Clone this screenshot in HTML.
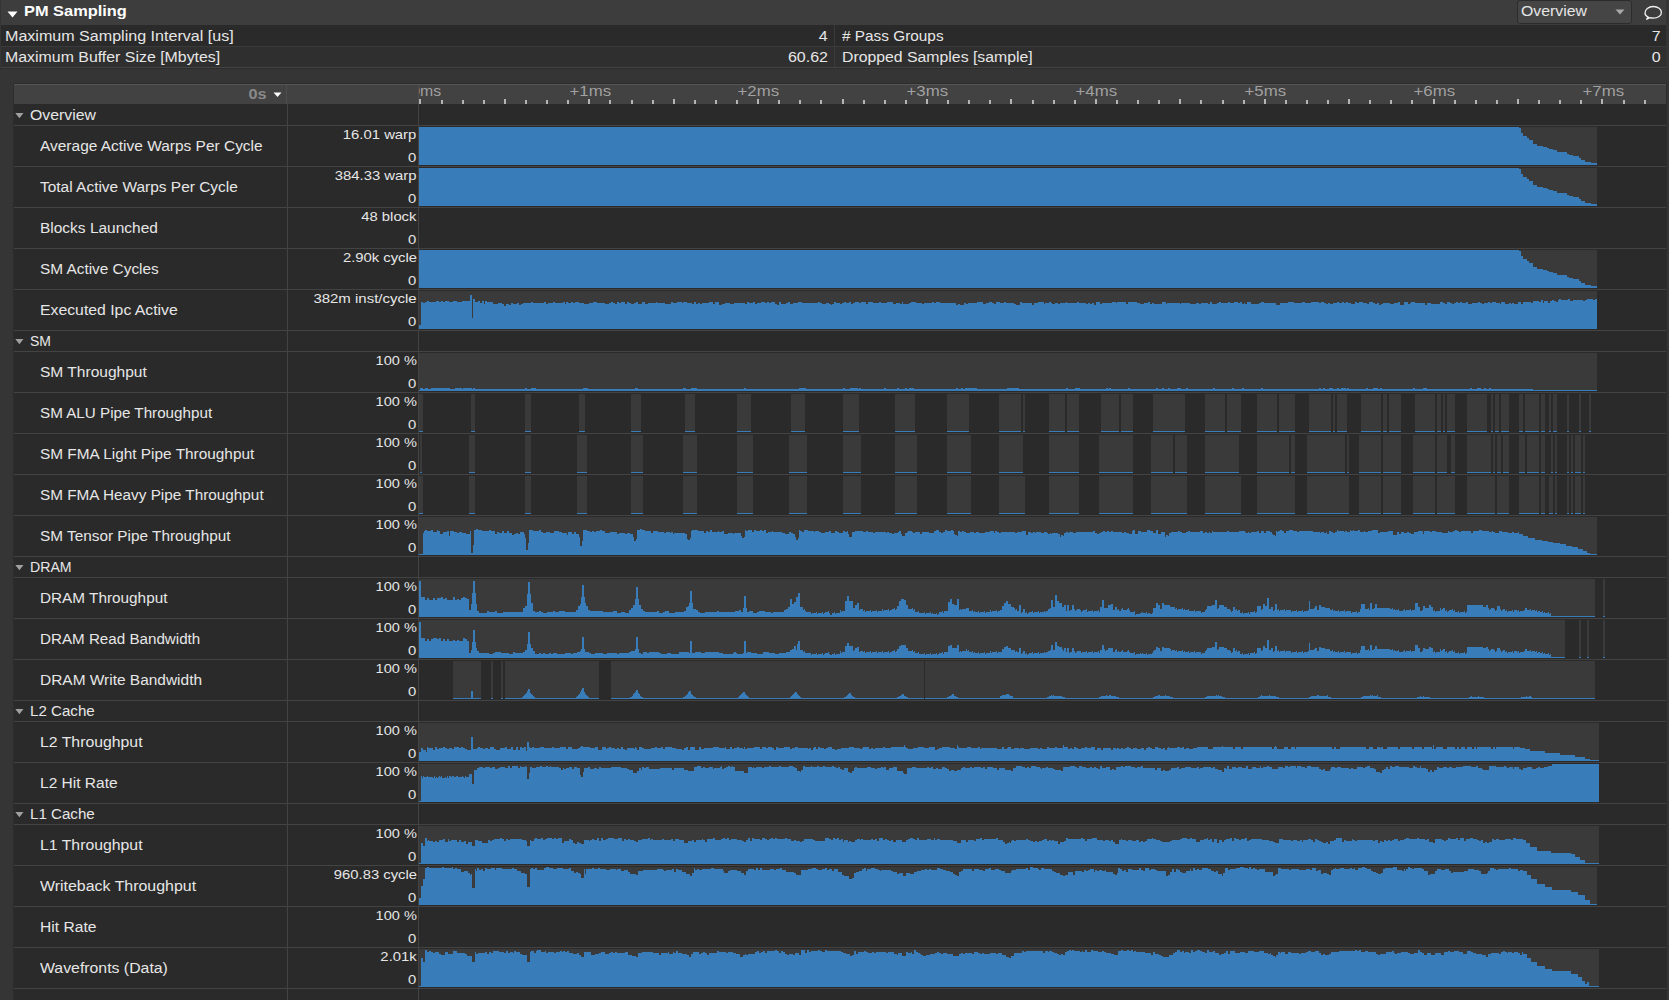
<!DOCTYPE html>
<html><head><meta charset="utf-8"><title>PM Sampling</title>
<style>
html,body{margin:0;padding:0;background:#353535;width:1669px;height:1000px;overflow:hidden}
body{position:relative;font-family:"Liberation Sans",sans-serif}
.r{position:absolute}
.t{position:absolute;white-space:nowrap;line-height:1}
svg{shape-rendering:geometricPrecision}
svg.c{shape-rendering:crispEdges}
</style></head><body>
<div class="r" style="left:0px;top:0px;width:1669px;height:1000px;background:#353535;"></div>
<div class="r" style="left:1px;top:0px;width:1665px;height:25px;background:#3d3d3d;"></div>
<svg class="r" style="left:7px;top:11px" width="11" height="7"><path d="M0.5 0.5 L10.5 0.5 L5.5 6.5 Z" fill="#ffffff"/></svg>
<div class="t" style="left:24px;top:4.15px;font-size:14px;font-weight:bold;color:#ffffff;transform:scaleX(1.1696);transform-origin:0 0;">PM Sampling</div>
<div class="r" style="left:1517px;top:0px;width:113px;height:22px;border:1px solid #2c2c2c;border-radius:3px;background:#454545"></div>
<div class="t" style="left:1521px;top:4.15px;font-size:14px;color:#e6e6e6;transform:scaleX(1.1297);transform-origin:0 0;">Overview</div>
<svg class="r" style="left:1615px;top:9px" width="10" height="6"><path d="M0.5 0.5 L9.5 0.5 L5 5.5 Z" fill="#a8a8a8"/></svg>
<svg class="r" style="left:1644px;top:5px" width="19" height="16"><path d="M4.2 12.2 C1.8 11 1 9.6 1 8 C1 4.6 4.4 1.5 9.2 1.5 C14 1.5 17.4 4.2 17.4 7.4 C17.4 10.6 14 13.2 9.2 13.2 C8 13.2 6.9 13 5.9 12.7 L2.4 14.4 Z" fill="none" stroke="#f0f0f0" stroke-width="1.3"/></svg>
<div class="r" style="left:1px;top:25px;width:1665px;height:21px;background:#2a2a2a;"></div>
<div class="r" style="left:1px;top:46px;width:1665px;height:1px;background:#3a3a3a;"></div>
<div class="r" style="left:1px;top:47px;width:1665px;height:20px;background:#2f2f2f;"></div>
<div class="r" style="left:1px;top:67px;width:1665px;height:1px;background:#444444;"></div>
<div class="r" style="left:0px;top:68px;width:1667px;height:1px;background:#2c2c2c;"></div>
<div class="r" style="left:834px;top:25px;width:1px;height:42px;background:#3a3a3a;"></div>
<div class="t" style="left:5px;top:29.15px;font-size:14px;color:#e6e6e6;transform:scaleX(1.1481);transform-origin:0 0;">Maximum Sampling Interval [us]</div>
<div class="t" style="right:841px;top:29.15px;font-size:14px;color:#e6e6e6;transform:scaleX(1.1446);transform-origin:100% 0;">4</div>
<div class="t" style="left:842px;top:29.15px;font-size:14px;color:#e6e6e6;transform:scaleX(1.0967);transform-origin:0 0;"># Pass Groups</div>
<div class="t" style="right:8px;top:29.15px;font-size:14px;color:#e6e6e6;transform:scaleX(1.1446);transform-origin:100% 0;">7</div>
<div class="t" style="left:5px;top:50.15px;font-size:14px;color:#e6e6e6;transform:scaleX(1.1351);transform-origin:0 0;">Maximum Buffer Size [Mbytes]</div>
<div class="t" style="right:841px;top:50.15px;font-size:14px;color:#e6e6e6;transform:scaleX(1.1446);transform-origin:100% 0;">60.62</div>
<div class="t" style="left:842px;top:50.15px;font-size:14px;color:#e6e6e6;transform:scaleX(1.1292);transform-origin:0 0;">Dropped Samples [sample]</div>
<div class="t" style="right:8px;top:50.15px;font-size:14px;color:#e6e6e6;transform:scaleX(1.1446);transform-origin:100% 0;">0</div>
<div class="r" style="left:13px;top:83px;width:1654px;height:917px;background:#2c2c2c;"></div>
<div class="r" style="left:14px;top:84px;width:1652px;height:916px;background:#2a2a2a;"></div>
<div class="r" style="left:14px;top:84px;width:1652px;height:1px;background:#555555;"></div>
<div class="r" style="left:14px;top:85px;width:1652px;height:19px;background:#424242;"></div>
<div class="r" style="left:286px;top:85px;width:1px;height:19px;background:#4e4e4e;"></div>
<div class="r" style="left:418px;top:85px;width:1px;height:19px;background:#4e4e4e;"></div>
<div class="t" style="right:1402px;top:87.15px;font-size:14px;font-weight:bold;color:#8a8a8a;transform:scaleX(1.1606);transform-origin:100% 0;">0s</div>
<svg class="r" style="left:273px;top:92px" width="9" height="6"><path d="M0.5 0.5 L8.5 0.5 L4.5 5 Z" fill="#ffffff"/></svg>
<div class="r" style="left:419px;top:85px;width:1247px;height:19px;overflow:hidden">
<div class="r" style="left:0.4px;top:14px;width:2px;height:5px;background:#b4b4b4"></div><div class="r" style="left:21.5px;top:15px;width:2px;height:4px;background:#b4b4b4"></div><div class="r" style="left:42.6px;top:15px;width:2px;height:4px;background:#b4b4b4"></div><div class="r" style="left:63.7px;top:15px;width:2px;height:4px;background:#b4b4b4"></div><div class="r" style="left:84.8px;top:14px;width:2px;height:5px;background:#b4b4b4"></div><div class="r" style="left:105.9px;top:15px;width:2px;height:4px;background:#b4b4b4"></div><div class="r" style="left:127.0px;top:15px;width:2px;height:4px;background:#b4b4b4"></div><div class="r" style="left:148.1px;top:15px;width:2px;height:4px;background:#b4b4b4"></div><div class="r" style="left:169.3px;top:14px;width:2px;height:5px;background:#b4b4b4"></div><div class="r" style="left:190.4px;top:15px;width:2px;height:4px;background:#b4b4b4"></div><div class="r" style="left:211.5px;top:15px;width:2px;height:4px;background:#b4b4b4"></div><div class="r" style="left:232.6px;top:15px;width:2px;height:4px;background:#b4b4b4"></div><div class="r" style="left:253.7px;top:14px;width:2px;height:5px;background:#b4b4b4"></div><div class="r" style="left:274.8px;top:15px;width:2px;height:4px;background:#b4b4b4"></div><div class="r" style="left:295.9px;top:15px;width:2px;height:4px;background:#b4b4b4"></div><div class="r" style="left:317.0px;top:15px;width:2px;height:4px;background:#b4b4b4"></div><div class="r" style="left:338.1px;top:14px;width:2px;height:5px;background:#b4b4b4"></div><div class="r" style="left:359.2px;top:15px;width:2px;height:4px;background:#b4b4b4"></div><div class="r" style="left:380.3px;top:15px;width:2px;height:4px;background:#b4b4b4"></div><div class="r" style="left:401.4px;top:15px;width:2px;height:4px;background:#b4b4b4"></div><div class="r" style="left:422.5px;top:14px;width:2px;height:5px;background:#b4b4b4"></div><div class="r" style="left:443.6px;top:15px;width:2px;height:4px;background:#b4b4b4"></div><div class="r" style="left:464.8px;top:15px;width:2px;height:4px;background:#b4b4b4"></div><div class="r" style="left:485.9px;top:15px;width:2px;height:4px;background:#b4b4b4"></div><div class="r" style="left:507.0px;top:14px;width:2px;height:5px;background:#b4b4b4"></div><div class="r" style="left:528.1px;top:15px;width:2px;height:4px;background:#b4b4b4"></div><div class="r" style="left:549.2px;top:15px;width:2px;height:4px;background:#b4b4b4"></div><div class="r" style="left:570.3px;top:15px;width:2px;height:4px;background:#b4b4b4"></div><div class="r" style="left:591.4px;top:14px;width:2px;height:5px;background:#b4b4b4"></div><div class="r" style="left:612.5px;top:15px;width:2px;height:4px;background:#b4b4b4"></div><div class="r" style="left:633.6px;top:15px;width:2px;height:4px;background:#b4b4b4"></div><div class="r" style="left:654.7px;top:15px;width:2px;height:4px;background:#b4b4b4"></div><div class="r" style="left:675.8px;top:14px;width:2px;height:5px;background:#b4b4b4"></div><div class="r" style="left:696.9px;top:15px;width:2px;height:4px;background:#b4b4b4"></div><div class="r" style="left:718.0px;top:15px;width:2px;height:4px;background:#b4b4b4"></div><div class="r" style="left:739.1px;top:15px;width:2px;height:4px;background:#b4b4b4"></div><div class="r" style="left:760.3px;top:14px;width:2px;height:5px;background:#b4b4b4"></div><div class="r" style="left:781.4px;top:15px;width:2px;height:4px;background:#b4b4b4"></div><div class="r" style="left:802.5px;top:15px;width:2px;height:4px;background:#b4b4b4"></div><div class="r" style="left:823.6px;top:15px;width:2px;height:4px;background:#b4b4b4"></div><div class="r" style="left:844.7px;top:14px;width:2px;height:5px;background:#b4b4b4"></div><div class="r" style="left:865.8px;top:15px;width:2px;height:4px;background:#b4b4b4"></div><div class="r" style="left:886.9px;top:15px;width:2px;height:4px;background:#b4b4b4"></div><div class="r" style="left:908.0px;top:15px;width:2px;height:4px;background:#b4b4b4"></div><div class="r" style="left:929.1px;top:14px;width:2px;height:5px;background:#b4b4b4"></div><div class="r" style="left:950.2px;top:15px;width:2px;height:4px;background:#b4b4b4"></div><div class="r" style="left:971.3px;top:15px;width:2px;height:4px;background:#b4b4b4"></div><div class="r" style="left:992.4px;top:15px;width:2px;height:4px;background:#b4b4b4"></div><div class="r" style="left:1013.5px;top:14px;width:2px;height:5px;background:#b4b4b4"></div><div class="r" style="left:1034.6px;top:15px;width:2px;height:4px;background:#b4b4b4"></div><div class="r" style="left:1055.8px;top:15px;width:2px;height:4px;background:#b4b4b4"></div><div class="r" style="left:1076.9px;top:15px;width:2px;height:4px;background:#b4b4b4"></div><div class="r" style="left:1098.0px;top:14px;width:2px;height:5px;background:#b4b4b4"></div><div class="r" style="left:1119.1px;top:15px;width:2px;height:4px;background:#b4b4b4"></div><div class="r" style="left:1140.2px;top:15px;width:2px;height:4px;background:#b4b4b4"></div><div class="r" style="left:1161.3px;top:15px;width:2px;height:4px;background:#b4b4b4"></div><div class="r" style="left:1182.4px;top:14px;width:2px;height:5px;background:#b4b4b4"></div><div class="r" style="left:1203.5px;top:15px;width:2px;height:4px;background:#b4b4b4"></div><div class="r" style="left:1224.6px;top:15px;width:2px;height:4px;background:#b4b4b4"></div>
<div class="t" style="left:-6.22px;top:-0.85px;font-size:14px;color:#a0a0a0;transform:scaleX(1.1288);transform-origin:50% 0">0ms</div>
<div class="t" style="left:153.56px;top:-0.85px;font-size:14px;color:#a0a0a0;transform:scaleX(1.2014);transform-origin:50% 0">+1ms</div>
<div class="t" style="left:322.42px;top:-0.85px;font-size:14px;color:#a0a0a0;transform:scaleX(1.2014);transform-origin:50% 0">+2ms</div>
<div class="t" style="left:491.28px;top:-0.85px;font-size:14px;color:#a0a0a0;transform:scaleX(1.2014);transform-origin:50% 0">+3ms</div>
<div class="t" style="left:660.14px;top:-0.85px;font-size:14px;color:#a0a0a0;transform:scaleX(1.2014);transform-origin:50% 0">+4ms</div>
<div class="t" style="left:829.00px;top:-0.85px;font-size:14px;color:#a0a0a0;transform:scaleX(1.2014);transform-origin:50% 0">+5ms</div>
<div class="t" style="left:997.86px;top:-0.85px;font-size:14px;color:#a0a0a0;transform:scaleX(1.2014);transform-origin:50% 0">+6ms</div>
<div class="t" style="left:1166.72px;top:-0.85px;font-size:14px;color:#a0a0a0;transform:scaleX(1.2014);transform-origin:50% 0">+7ms</div>
</div>
<svg class="r" style="left:15px;top:113px" width="9" height="6"><path d="M0.3 0 L8.5 0 L4.4 5.2 Z" fill="#a0a0a0"/></svg>
<div class="t" style="left:30px;top:108.15px;font-size:14px;color:#e6e6e6;transform:scaleX(1.1297);transform-origin:0 0;">Overview</div>
<div class="r" style="left:14px;top:125px;width:1652px;height:1px;background:#434343;"></div>
<div class="t" style="left:40px;top:139.15px;font-size:14px;color:#e6e6e6;transform:scaleX(1.1048);transform-origin:0 0;">Average Active Warps Per Cycle</div>
<div class="t" style="right:1252.3px;top:128.00px;font-size:13px;color:#e6e6e6;transform:scaleX(1.1423);transform-origin:100% 0;">16.01 warp</div>
<div class="t" style="right:1252.3px;top:151.00px;font-size:13px;color:#e6e6e6;transform:scaleX(1.1425);transform-origin:100% 0;">0</div>
<div class="r" style="left:14px;top:166px;width:1652px;height:1px;background:#434343;"></div>
<div class="t" style="left:40px;top:180.15px;font-size:14px;color:#e6e6e6;transform:scaleX(1.1040);transform-origin:0 0;">Total Active Warps Per Cycle</div>
<div class="t" style="right:1252.3px;top:169.00px;font-size:13px;color:#e6e6e6;transform:scaleX(1.1423);transform-origin:100% 0;">384.33 warp</div>
<div class="t" style="right:1252.3px;top:192.00px;font-size:13px;color:#e6e6e6;transform:scaleX(1.1425);transform-origin:100% 0;">0</div>
<div class="r" style="left:14px;top:207px;width:1652px;height:1px;background:#434343;"></div>
<div class="t" style="left:40px;top:221.15px;font-size:14px;color:#e6e6e6;transform:scaleX(1.1054);transform-origin:0 0;">Blocks Launched</div>
<div class="t" style="right:1252.3px;top:210.00px;font-size:13px;color:#e6e6e6;transform:scaleX(1.1384);transform-origin:100% 0;">48 block</div>
<div class="t" style="right:1252.3px;top:233.00px;font-size:13px;color:#e6e6e6;transform:scaleX(1.1425);transform-origin:100% 0;">0</div>
<div class="r" style="left:14px;top:248px;width:1652px;height:1px;background:#434343;"></div>
<div class="t" style="left:40px;top:262.15px;font-size:14px;color:#e6e6e6;transform:scaleX(1.0980);transform-origin:0 0;">SM Active Cycles</div>
<div class="t" style="right:1252.3px;top:251.00px;font-size:13px;color:#e6e6e6;transform:scaleX(1.1400);transform-origin:100% 0;">2.90k cycle</div>
<div class="t" style="right:1252.3px;top:274.00px;font-size:13px;color:#e6e6e6;transform:scaleX(1.1425);transform-origin:100% 0;">0</div>
<div class="r" style="left:14px;top:289px;width:1652px;height:1px;background:#434343;"></div>
<div class="t" style="left:40px;top:303.15px;font-size:14px;color:#e6e6e6;transform:scaleX(1.1278);transform-origin:0 0;">Executed Ipc Active</div>
<div class="t" style="right:1252.3px;top:292.00px;font-size:13px;color:#e6e6e6;transform:scaleX(1.1520);transform-origin:100% 0;">382m inst/cycle</div>
<div class="t" style="right:1252.3px;top:315.00px;font-size:13px;color:#e6e6e6;transform:scaleX(1.1425);transform-origin:100% 0;">0</div>
<div class="r" style="left:14px;top:330px;width:1652px;height:1px;background:#434343;"></div>
<svg class="r" style="left:15px;top:339px" width="9" height="6"><path d="M0.3 0 L8.5 0 L4.4 5.2 Z" fill="#a0a0a0"/></svg>
<div class="t" style="left:30px;top:334.15px;font-size:14px;color:#e6e6e6;transform:scaleX(0.9985);transform-origin:0 0;">SM</div>
<div class="r" style="left:14px;top:351px;width:1652px;height:1px;background:#434343;"></div>
<div class="t" style="left:40px;top:365.15px;font-size:14px;color:#e6e6e6;transform:scaleX(1.1095);transform-origin:0 0;">SM Throughput</div>
<div class="t" style="right:1252.3px;top:354.00px;font-size:13px;color:#e6e6e6;transform:scaleX(1.1195);transform-origin:100% 0;">100 %</div>
<div class="t" style="right:1252.3px;top:377.00px;font-size:13px;color:#e6e6e6;transform:scaleX(1.1425);transform-origin:100% 0;">0</div>
<div class="r" style="left:14px;top:392px;width:1652px;height:1px;background:#434343;"></div>
<div class="t" style="left:40px;top:406.15px;font-size:14px;color:#e6e6e6;transform:scaleX(1.0859);transform-origin:0 0;">SM ALU Pipe Throughput</div>
<div class="t" style="right:1252.3px;top:395.00px;font-size:13px;color:#e6e6e6;transform:scaleX(1.1195);transform-origin:100% 0;">100 %</div>
<div class="t" style="right:1252.3px;top:418.00px;font-size:13px;color:#e6e6e6;transform:scaleX(1.1425);transform-origin:100% 0;">0</div>
<div class="r" style="left:14px;top:433px;width:1652px;height:1px;background:#434343;"></div>
<div class="t" style="left:40px;top:447.15px;font-size:14px;color:#e6e6e6;transform:scaleX(1.0986);transform-origin:0 0;">SM FMA Light Pipe Throughput</div>
<div class="t" style="right:1252.3px;top:436.00px;font-size:13px;color:#e6e6e6;transform:scaleX(1.1195);transform-origin:100% 0;">100 %</div>
<div class="t" style="right:1252.3px;top:459.00px;font-size:13px;color:#e6e6e6;transform:scaleX(1.1425);transform-origin:100% 0;">0</div>
<div class="r" style="left:14px;top:474px;width:1652px;height:1px;background:#434343;"></div>
<div class="t" style="left:40px;top:488.15px;font-size:14px;color:#e6e6e6;transform:scaleX(1.0942);transform-origin:0 0;">SM FMA Heavy Pipe Throughput</div>
<div class="t" style="right:1252.3px;top:477.00px;font-size:13px;color:#e6e6e6;transform:scaleX(1.1195);transform-origin:100% 0;">100 %</div>
<div class="t" style="right:1252.3px;top:500.00px;font-size:13px;color:#e6e6e6;transform:scaleX(1.1425);transform-origin:100% 0;">0</div>
<div class="r" style="left:14px;top:515px;width:1652px;height:1px;background:#434343;"></div>
<div class="t" style="left:40px;top:529.15px;font-size:14px;color:#e6e6e6;transform:scaleX(1.0960);transform-origin:0 0;">SM Tensor Pipe Throughput</div>
<div class="t" style="right:1252.3px;top:518.00px;font-size:13px;color:#e6e6e6;transform:scaleX(1.1195);transform-origin:100% 0;">100 %</div>
<div class="t" style="right:1252.3px;top:541.00px;font-size:13px;color:#e6e6e6;transform:scaleX(1.1425);transform-origin:100% 0;">0</div>
<div class="r" style="left:14px;top:556px;width:1652px;height:1px;background:#434343;"></div>
<svg class="r" style="left:15px;top:565px" width="9" height="6"><path d="M0.3 0 L8.5 0 L4.4 5.2 Z" fill="#a0a0a0"/></svg>
<div class="t" style="left:30px;top:560.15px;font-size:14px;color:#e6e6e6;transform:scaleX(1.0095);transform-origin:0 0;">DRAM</div>
<div class="r" style="left:14px;top:577px;width:1652px;height:1px;background:#434343;"></div>
<div class="t" style="left:40px;top:591.15px;font-size:14px;color:#e6e6e6;transform:scaleX(1.0941);transform-origin:0 0;">DRAM Throughput</div>
<div class="t" style="right:1252.3px;top:580.00px;font-size:13px;color:#e6e6e6;transform:scaleX(1.1195);transform-origin:100% 0;">100 %</div>
<div class="t" style="right:1252.3px;top:603.00px;font-size:13px;color:#e6e6e6;transform:scaleX(1.1425);transform-origin:100% 0;">0</div>
<div class="r" style="left:14px;top:618px;width:1652px;height:1px;background:#434343;"></div>
<div class="t" style="left:40px;top:632.15px;font-size:14px;color:#e6e6e6;transform:scaleX(1.0841);transform-origin:0 0;">DRAM Read Bandwidth</div>
<div class="t" style="right:1252.3px;top:621.00px;font-size:13px;color:#e6e6e6;transform:scaleX(1.1195);transform-origin:100% 0;">100 %</div>
<div class="t" style="right:1252.3px;top:644.00px;font-size:13px;color:#e6e6e6;transform:scaleX(1.1425);transform-origin:100% 0;">0</div>
<div class="r" style="left:14px;top:659px;width:1652px;height:1px;background:#434343;"></div>
<div class="t" style="left:40px;top:673.15px;font-size:14px;color:#e6e6e6;transform:scaleX(1.1039);transform-origin:0 0;">DRAM Write Bandwidth</div>
<div class="t" style="right:1252.3px;top:662.00px;font-size:13px;color:#e6e6e6;transform:scaleX(1.1195);transform-origin:100% 0;">100 %</div>
<div class="t" style="right:1252.3px;top:685.00px;font-size:13px;color:#e6e6e6;transform:scaleX(1.1425);transform-origin:100% 0;">0</div>
<div class="r" style="left:14px;top:700px;width:1652px;height:1px;background:#434343;"></div>
<svg class="r" style="left:15px;top:709px" width="9" height="6"><path d="M0.3 0 L8.5 0 L4.4 5.2 Z" fill="#a0a0a0"/></svg>
<div class="t" style="left:30px;top:704.15px;font-size:14px;color:#e6e6e6;transform:scaleX(1.0801);transform-origin:0 0;">L2 Cache</div>
<div class="r" style="left:14px;top:721px;width:1652px;height:1px;background:#434343;"></div>
<div class="t" style="left:40px;top:735.15px;font-size:14px;color:#e6e6e6;transform:scaleX(1.1289);transform-origin:0 0;">L2 Throughput</div>
<div class="t" style="right:1252.3px;top:724.00px;font-size:13px;color:#e6e6e6;transform:scaleX(1.1195);transform-origin:100% 0;">100 %</div>
<div class="t" style="right:1252.3px;top:747.00px;font-size:13px;color:#e6e6e6;transform:scaleX(1.1425);transform-origin:100% 0;">0</div>
<div class="r" style="left:14px;top:762px;width:1652px;height:1px;background:#434343;"></div>
<div class="t" style="left:40px;top:776.15px;font-size:14px;color:#e6e6e6;transform:scaleX(1.1085);transform-origin:0 0;">L2 Hit Rate</div>
<div class="t" style="right:1252.3px;top:765.00px;font-size:13px;color:#e6e6e6;transform:scaleX(1.1195);transform-origin:100% 0;">100 %</div>
<div class="t" style="right:1252.3px;top:788.00px;font-size:13px;color:#e6e6e6;transform:scaleX(1.1425);transform-origin:100% 0;">0</div>
<div class="r" style="left:14px;top:803px;width:1652px;height:1px;background:#434343;"></div>
<svg class="r" style="left:15px;top:812px" width="9" height="6"><path d="M0.3 0 L8.5 0 L4.4 5.2 Z" fill="#a0a0a0"/></svg>
<div class="t" style="left:30px;top:807.15px;font-size:14px;color:#e6e6e6;transform:scaleX(1.0801);transform-origin:0 0;">L1 Cache</div>
<div class="r" style="left:14px;top:824px;width:1652px;height:1px;background:#434343;"></div>
<div class="t" style="left:40px;top:838.15px;font-size:14px;color:#e6e6e6;transform:scaleX(1.1289);transform-origin:0 0;">L1 Throughput</div>
<div class="t" style="right:1252.3px;top:827.00px;font-size:13px;color:#e6e6e6;transform:scaleX(1.1195);transform-origin:100% 0;">100 %</div>
<div class="t" style="right:1252.3px;top:850.00px;font-size:13px;color:#e6e6e6;transform:scaleX(1.1425);transform-origin:100% 0;">0</div>
<div class="r" style="left:14px;top:865px;width:1652px;height:1px;background:#434343;"></div>
<div class="t" style="left:40px;top:879.15px;font-size:14px;color:#e6e6e6;transform:scaleX(1.1373);transform-origin:0 0;">Writeback Throughput</div>
<div class="t" style="right:1252.3px;top:868.00px;font-size:13px;color:#e6e6e6;transform:scaleX(1.1389);transform-origin:100% 0;">960.83 cycle</div>
<div class="t" style="right:1252.3px;top:891.00px;font-size:13px;color:#e6e6e6;transform:scaleX(1.1425);transform-origin:100% 0;">0</div>
<div class="r" style="left:14px;top:906px;width:1652px;height:1px;background:#434343;"></div>
<div class="t" style="left:40px;top:920.15px;font-size:14px;color:#e6e6e6;transform:scaleX(1.1165);transform-origin:0 0;">Hit Rate</div>
<div class="t" style="right:1252.3px;top:909.00px;font-size:13px;color:#e6e6e6;transform:scaleX(1.1195);transform-origin:100% 0;">100 %</div>
<div class="t" style="right:1252.3px;top:932.00px;font-size:13px;color:#e6e6e6;transform:scaleX(1.1425);transform-origin:100% 0;">0</div>
<div class="r" style="left:14px;top:947px;width:1652px;height:1px;background:#434343;"></div>
<div class="t" style="left:40px;top:961.15px;font-size:14px;color:#e6e6e6;transform:scaleX(1.1308);transform-origin:0 0;">Wavefronts (Data)</div>
<div class="t" style="right:1252.3px;top:950.00px;font-size:13px;color:#e6e6e6;transform:scaleX(1.1459);transform-origin:100% 0;">2.01k</div>
<div class="t" style="right:1252.3px;top:973.00px;font-size:13px;color:#e6e6e6;transform:scaleX(1.1425);transform-origin:100% 0;">0</div>
<div class="r" style="left:14px;top:988px;width:1652px;height:1px;background:#434343;"></div>
<div class="r" style="left:287px;top:104px;width:1px;height:896px;background:#434343;"></div>
<div class="r" style="left:418px;top:104px;width:1px;height:896px;background:#434343;"></div>
<svg class="r c" style="left:419px;top:127px" width="1189" height="38"><rect x="0" y="0" width="1178" height="38" fill="#3a3a3a"/><path d="M0 38H0V0H1100V1H1102V6H1104V9H1108V11H1110V13H1114V17H1118V19H1124V20H1128V21H1130V22H1134V23H1138V25H1148V27H1150V28H1154V29H1160V31H1162V33H1166V35H1172V36H1178V38H1181V38Z" fill="#387db9"/></svg>
<svg class="r c" style="left:419px;top:168px" width="1189" height="38"><rect x="0" y="0" width="1178" height="38" fill="#3a3a3a"/><path d="M0 38H0V0H1100V1H1102V6H1104V9H1108V11H1110V13H1114V17H1118V19H1124V20H1128V21H1130V22H1134V23H1138V25H1148V27H1150V28H1154V29H1160V31H1162V33H1166V35H1172V36H1178V38H1181V38Z" fill="#387db9"/></svg>
<svg class="r c" style="left:419px;top:250px" width="1189" height="38"><rect x="0" y="0" width="1178" height="38" fill="#3a3a3a"/><path d="M0 38H0V0H1100V1H1102V6H1104V9H1108V11H1110V13H1114V17H1118V19H1124V20H1128V21H1130V22H1134V23H1138V25H1148V27H1150V28H1154V29H1160V31H1162V33H1166V35H1172V36H1178V38H1181V38Z" fill="#387db9"/></svg>
<svg class="r c" style="left:419px;top:291px" width="1189" height="38"><rect x="0" y="0" width="1178" height="38" fill="#3a3a3a"/><path d="M0 38H0V34H2V11H4V12H6V11H8V10H10V11H17V10H20V11H22V10H24V11H26V10H30V11H34V10H38V11H43V10H51V4H53V27H54V8H56V11H59V10H61V12H63V10H65V13H66V10H68V11H74V13H79V12H83V13H85V15H87V13H90V14H92V12H94V13H98V12H100V14H102V13H104V12H112V11H114V12H125V11H127V13H129V12H134V11H136V12H144V11H146V13H147V11H149V12H152V11H154V12H156V11H160V12H165V13H170V12H174V11H178V12H186V13H190V12H192V11H194V12H196V13H198V11H200V12H202V11H206V13H208V11H210V12H212V13H215V12H217V11H219V13H223V11H226V13H229V12H237V11H238V12H246V13H252V11H254V12H258V11H263V12H264V11H268V12H273V13H275V11H277V13H279V12H281V13H283V12H290V11H294V13H296V11H300V14H303V13H306V12H311V13H315V12H326V13H328V11H330V12H334V11H336V13H338V12H342V11H346V12H348V11H350V12H352V11H356V13H358V14H360V11H362V13H367V12H369V11H371V13H374V12H379V11H383V12H399V11H401V12H403V13H407V12H410V13H412V14H413V13H415V11H417V12H421V13H423V12H425V11H427V12H430V11H432V13H434V12H436V11H440V12H442V11H447V13H449V11H454V12H460V11H462V12H468V11H474V13H477V12H481V13H483V11H484V13H490V12H492V11H497V12H503V13H505V12H513V11H515V12H517V11H521V12H537V14H539V13H541V14H545V12H547V13H549V12H558V11H564V13H567V12H570V11H573V12H575V13H577V11H581V12H585V11H587V12H595V13H597V14H601V11H603V12H613V14H615V12H619V11H625V13H626V12H630V11H632V12H633V13H636V12H639V13H641V12H647V11H648V12H658V11H660V12H667V13H669V12H671V13H673V12H675V14H677V11H681V13H683V12H693V11H697V12H698V11H707V13H709V11H718V12H721V13H725V12H729V11H731V13H733V12H735V13H743V11H747V13H748V12H761V13H762V12H771V13H777V12H780V13H782V12H789V13H791V11H793V13H798V12H800V11H802V12H809V11H811V12H815V11H819V12H821V11H823V13H825V12H826V13H828V11H832V13H840V12H842V11H845V12H857V14H861V12H869V11H875V12H883V11H886V12H892V11H900V12H902V11H905V12H907V13H909V12H911V13H914V12H918V11H920V12H923V11H925V12H927V11H929V12H932V13H936V11H938V12H940V11H944V12H948V13H950V11H954V12H956V13H958V12H960V14H962V13H964V12H971V13H975V12H979V11H981V14H985V11H989V13H991V12H992V11H996V12H1006V14H1008V12H1012V13H1021V11H1024V12H1026V13H1028V11H1031V12H1033V13H1035V12H1037V11H1039V12H1041V11H1043V12H1047V11H1049V13H1053V12H1059V11H1061V12H1063V13H1065V12H1069V11H1071V12H1073V11H1077V12H1081V13H1082V11H1086V13H1090V12H1092V13H1093V12H1095V13H1099V11H1102V13H1104V11H1112V12H1114V10H1120V11H1122V9H1124V12H1125V10H1129V12H1131V10H1133V9H1135V10H1137V11H1139V9H1140V8H1142V9H1149V8H1151V10H1154V9H1164V10H1166V9H1168V8H1174V9H1176V8H1178V38H1181V38Z" fill="#387db9"/></svg>
<svg class="r c" style="left:419px;top:353px" width="1189" height="38"><rect x="0" y="0" width="1178" height="38" fill="#3a3a3a"/><path d="M0 38H0V37H1V35H4V36H6V35H9V36H12V35H31V36H36V35H43V36H44V35H53V36H54V35H56V36H106V35H108V36H112V35H117V36H164V35H169V36H216V35H219V36H264V35H267V36H272V35H278V36H325V35H327V36H380V35H387V36H424V35H426V36H431V35H439V36H440V35H442V36H465V35H467V36H478V35H480V36H486V35H488V36H490V35H495V36H537V35H539V36H542V35H544V36H546V35H558V36H588V35H600V36H647V35H649V36H656V35H661V36H687V35H689V36H690V35H692V36H709V35H711V36H737V35H739V36H743V35H745V36H749V35H751V36H758V35H762V36H767V35H769V36H794V35H796V36H813V35H815V36H823V35H825V36H842V35H844V36H900V35H902V36H904V35H906V36H910V35H914V36H918V35H920V36H922V35H927V36H928V35H930V36H947V35H949V36H954V35H959V36H961V35H963V36H994V35H996V36H1004V35H1008V36H1051V35H1053V36H1058V35H1062V36H1065V35H1067V36H1070V35H1072V36H1114V37H1178V38H1181V38Z" fill="#387db9"/></svg>
<svg class="r c" style="left:419px;top:394px" width="1189" height="38"><rect x="0" y="0" width="4" height="38" fill="#3a3a3a"/><rect x="52" y="0" width="4" height="38" fill="#3a3a3a"/><rect x="106" y="0" width="6" height="38" fill="#3a3a3a"/><rect x="160" y="0" width="6" height="38" fill="#3a3a3a"/><rect x="212" y="0" width="10" height="38" fill="#3a3a3a"/><rect x="266" y="0" width="10" height="38" fill="#3a3a3a"/><rect x="318" y="0" width="14" height="38" fill="#3a3a3a"/><rect x="372" y="0" width="14" height="38" fill="#3a3a3a"/><rect x="424" y="0" width="16" height="38" fill="#3a3a3a"/><rect x="476" y="0" width="20" height="38" fill="#3a3a3a"/><rect x="528" y="0" width="22" height="38" fill="#3a3a3a"/><rect x="580" y="0" width="22" height="38" fill="#3a3a3a"/><rect x="604" y="0" width="2" height="38" fill="#3a3a3a"/><rect x="630" y="0" width="16" height="38" fill="#3a3a3a"/><rect x="648" y="0" width="12" height="38" fill="#3a3a3a"/><rect x="682" y="0" width="18" height="38" fill="#3a3a3a"/><rect x="702" y="0" width="12" height="38" fill="#3a3a3a"/><rect x="734" y="0" width="32" height="38" fill="#3a3a3a"/><rect x="786" y="0" width="20" height="38" fill="#3a3a3a"/><rect x="808" y="0" width="14" height="38" fill="#3a3a3a"/><rect x="838" y="0" width="20" height="38" fill="#3a3a3a"/><rect x="860" y="0" width="16" height="38" fill="#3a3a3a"/><rect x="890" y="0" width="22" height="38" fill="#3a3a3a"/><rect x="914" y="0" width="2" height="38" fill="#3a3a3a"/><rect x="918" y="0" width="10" height="38" fill="#3a3a3a"/><rect x="942" y="0" width="20" height="38" fill="#3a3a3a"/><rect x="964" y="0" width="4" height="38" fill="#3a3a3a"/><rect x="970" y="0" width="12" height="38" fill="#3a3a3a"/><rect x="996" y="0" width="20" height="38" fill="#3a3a3a"/><rect x="1018" y="0" width="4" height="38" fill="#3a3a3a"/><rect x="1024" y="0" width="2" height="38" fill="#3a3a3a"/><rect x="1028" y="0" width="8" height="38" fill="#3a3a3a"/><rect x="1048" y="0" width="20" height="38" fill="#3a3a3a"/><rect x="1072" y="0" width="2" height="38" fill="#3a3a3a"/><rect x="1076" y="0" width="4" height="38" fill="#3a3a3a"/><rect x="1082" y="0" width="8" height="38" fill="#3a3a3a"/><rect x="1100" y="0" width="4" height="38" fill="#3a3a3a"/><rect x="1106" y="0" width="14" height="38" fill="#3a3a3a"/><rect x="1122" y="0" width="4" height="38" fill="#3a3a3a"/><rect x="1130" y="0" width="2" height="38" fill="#3a3a3a"/><rect x="1134" y="0" width="4" height="38" fill="#3a3a3a"/><rect x="1148" y="0" width="2" height="38" fill="#3a3a3a"/><rect x="1160" y="0" width="2" height="38" fill="#3a3a3a"/><rect x="1170" y="0" width="2" height="38" fill="#3a3a3a"/><path d="M0 38H0V37H4V38H52V37H56V38H106V37H112V38H160V37H166V38H212V37H222V38H266V37H276V38H318V37H332V38H372V37H386V38H424V37H440V38H476V37H496V38H528V37H550V38H580V37H602V38H604V37H606V38H630V37H646V38H648V37H660V38H682V37H700V38H702V37H714V38H734V37H766V38H786V37H806V38H808V37H822V38H838V37H858V38H860V37H876V38H890V37H912V38H914V37H916V38H918V37H928V38H942V37H962V38H964V37H968V38H970V37H982V38H996V37H1016V38H1018V37H1022V38H1024V37H1026V38H1028V37H1036V38H1048V37H1068V38H1072V37H1074V38H1076V37H1080V38H1082V37H1090V38H1100V37H1104V38H1106V37H1120V38H1122V37H1126V38H1130V37H1132V38H1134V37H1138V38H1148V37H1150V38H1160V37H1162V38H1170V37H1172V38H1181V38Z" fill="#387db9"/></svg>
<svg class="r c" style="left:419px;top:435px" width="1189" height="38"><rect x="1" y="0" width="2" height="38" fill="#3a3a3a"/><rect x="50" y="0" width="6" height="38" fill="#3a3a3a"/><rect x="106" y="0" width="6" height="38" fill="#3a3a3a"/><rect x="158" y="0" width="10" height="38" fill="#3a3a3a"/><rect x="212" y="0" width="12" height="38" fill="#3a3a3a"/><rect x="264" y="0" width="14" height="38" fill="#3a3a3a"/><rect x="318" y="0" width="16" height="38" fill="#3a3a3a"/><rect x="370" y="0" width="18" height="38" fill="#3a3a3a"/><rect x="424" y="0" width="18" height="38" fill="#3a3a3a"/><rect x="476" y="0" width="22" height="38" fill="#3a3a3a"/><rect x="528" y="0" width="24" height="38" fill="#3a3a3a"/><rect x="580" y="0" width="24" height="38" fill="#3a3a3a"/><rect x="630" y="0" width="30" height="38" fill="#3a3a3a"/><rect x="680" y="0" width="34" height="38" fill="#3a3a3a"/><rect x="732" y="0" width="22" height="38" fill="#3a3a3a"/><rect x="756" y="0" width="12" height="38" fill="#3a3a3a"/><rect x="786" y="0" width="34" height="38" fill="#3a3a3a"/><rect x="838" y="0" width="32" height="38" fill="#3a3a3a"/><rect x="872" y="0" width="4" height="38" fill="#3a3a3a"/><rect x="888" y="0" width="38" height="38" fill="#3a3a3a"/><rect x="928" y="0" width="2" height="38" fill="#3a3a3a"/><rect x="940" y="0" width="22" height="38" fill="#3a3a3a"/><rect x="964" y="0" width="18" height="38" fill="#3a3a3a"/><rect x="994" y="0" width="22" height="38" fill="#3a3a3a"/><rect x="1018" y="0" width="10" height="38" fill="#3a3a3a"/><rect x="1032" y="0" width="4" height="38" fill="#3a3a3a"/><rect x="1048" y="0" width="24" height="38" fill="#3a3a3a"/><rect x="1074" y="0" width="2" height="38" fill="#3a3a3a"/><rect x="1078" y="0" width="4" height="38" fill="#3a3a3a"/><rect x="1084" y="0" width="6" height="38" fill="#3a3a3a"/><rect x="1100" y="0" width="6" height="38" fill="#3a3a3a"/><rect x="1108" y="0" width="12" height="38" fill="#3a3a3a"/><rect x="1122" y="0" width="4" height="38" fill="#3a3a3a"/><rect x="1132" y="0" width="2" height="38" fill="#3a3a3a"/><rect x="1136" y="0" width="2" height="38" fill="#3a3a3a"/><rect x="1148" y="0" width="2" height="38" fill="#3a3a3a"/><rect x="1152" y="0" width="2" height="38" fill="#3a3a3a"/><rect x="1156" y="0" width="6" height="38" fill="#3a3a3a"/><rect x="1164" y="0" width="2" height="38" fill="#3a3a3a"/><path d="M0 38H0V38H1V37H3V38H50V37H56V38H106V37H112V38H158V37H168V38H212V37H224V38H264V37H278V38H318V37H334V38H370V37H388V38H424V37H442V38H476V37H498V38H528V37H552V38H580V37H604V38H630V37H660V38H680V37H714V38H732V37H754V38H756V37H768V38H786V37H820V38H838V37H870V38H872V37H876V38H888V37H926V38H928V37H930V38H940V37H962V38H964V37H982V38H994V37H1016V38H1018V37H1028V38H1032V37H1036V38H1048V37H1072V38H1074V37H1076V38H1078V37H1082V38H1084V37H1090V38H1100V37H1106V38H1108V37H1120V38H1122V37H1126V38H1132V37H1134V38H1136V37H1138V38H1148V37H1150V38H1152V37H1154V38H1156V37H1162V38H1164V37H1166V38H1181V38Z" fill="#387db9"/></svg>
<svg class="r c" style="left:419px;top:476px" width="1189" height="38"><rect x="0" y="0" width="4" height="38" fill="#3a3a3a"/><rect x="50" y="0" width="6" height="38" fill="#3a3a3a"/><rect x="106" y="0" width="6" height="38" fill="#3a3a3a"/><rect x="158" y="0" width="10" height="38" fill="#3a3a3a"/><rect x="212" y="0" width="12" height="38" fill="#3a3a3a"/><rect x="264" y="0" width="14" height="38" fill="#3a3a3a"/><rect x="318" y="0" width="16" height="38" fill="#3a3a3a"/><rect x="370" y="0" width="18" height="38" fill="#3a3a3a"/><rect x="424" y="0" width="18" height="38" fill="#3a3a3a"/><rect x="476" y="0" width="22" height="38" fill="#3a3a3a"/><rect x="528" y="0" width="24" height="38" fill="#3a3a3a"/><rect x="580" y="0" width="26" height="38" fill="#3a3a3a"/><rect x="630" y="0" width="30" height="38" fill="#3a3a3a"/><rect x="680" y="0" width="34" height="38" fill="#3a3a3a"/><rect x="732" y="0" width="36" height="38" fill="#3a3a3a"/><rect x="786" y="0" width="36" height="38" fill="#3a3a3a"/><rect x="838" y="0" width="38" height="38" fill="#3a3a3a"/><rect x="888" y="0" width="42" height="38" fill="#3a3a3a"/><rect x="940" y="0" width="22" height="38" fill="#3a3a3a"/><rect x="964" y="0" width="18" height="38" fill="#3a3a3a"/><rect x="994" y="0" width="22" height="38" fill="#3a3a3a"/><rect x="1018" y="0" width="18" height="38" fill="#3a3a3a"/><rect x="1048" y="0" width="28" height="38" fill="#3a3a3a"/><rect x="1078" y="0" width="12" height="38" fill="#3a3a3a"/><rect x="1100" y="0" width="20" height="38" fill="#3a3a3a"/><rect x="1122" y="0" width="4" height="38" fill="#3a3a3a"/><rect x="1130" y="0" width="4" height="38" fill="#3a3a3a"/><rect x="1136" y="0" width="2" height="38" fill="#3a3a3a"/><rect x="1148" y="0" width="2" height="38" fill="#3a3a3a"/><rect x="1152" y="0" width="2" height="38" fill="#3a3a3a"/><rect x="1156" y="0" width="6" height="38" fill="#3a3a3a"/><rect x="1164" y="0" width="2" height="38" fill="#3a3a3a"/><path d="M0 38H0V37H4V38H50V37H56V38H106V37H112V38H158V37H168V38H212V37H224V38H264V37H278V38H318V37H334V38H370V37H388V38H424V37H442V38H476V37H498V38H528V37H552V38H580V37H606V38H630V37H660V38H680V37H714V38H732V37H768V38H786V37H822V38H838V37H876V38H888V37H930V38H940V37H962V38H964V37H982V38H994V37H1016V38H1018V37H1036V38H1048V37H1076V38H1078V37H1090V38H1100V37H1120V38H1122V37H1126V38H1130V37H1134V38H1136V37H1138V38H1148V37H1150V38H1152V37H1154V38H1156V37H1162V38H1164V37H1166V38H1181V38Z" fill="#387db9"/></svg>
<svg class="r c" style="left:419px;top:517px" width="1189" height="38"><rect x="0" y="0" width="1178" height="38" fill="#3a3a3a"/><path d="M0 38H0V37H4V16H5V14H6V13H8V14H12V13H14V15H18V13H19V14H21V17H24V15H28V14H30V19H31V14H35V15H38V16H40V15H43V16H47V17H51V14H52V36H54V28H55V13H57V12H59V13H63V14H70V13H72V14H76V17H78V15H80V16H83V14H85V16H88V14H90V16H93V18H95V17H97V16H99V17H101V15H105V17H106V21H107V33H109V26H110V13H114V14H120V13H122V15H124V16H127V15H131V16H135V14H140V15H143V16H148V18H149V15H153V17H155V15H157V17H160V20H161V29H163V24H164V13H168V14H171V15H173V14H175V15H177V14H181V13H183V14H186V16H191V15H198V17H200V16H206V17H208V16H211V17H214V20H215V24H217V22H218V13H221V12H223V13H226V14H232V16H234V14H239V15H245V16H247V15H251V16H252V15H254V17H255V16H266V17H268V22H269V23H271V21H272V14H273V13H279V14H285V16H287V14H289V15H291V13H293V15H299V14H300V15H303V14H305V17H309V16H314V17H315V16H322V19H323V21H325V20H326V13H327V14H329V13H333V15H335V13H337V14H341V13H343V14H345V13H347V16H349V15H353V14H354V15H363V16H366V17H370V15H372V16H374V17H376V20H377V23H379V21H380V13H381V14H383V15H385V13H389V14H395V15H396V14H400V15H402V16H406V15H410V14H412V16H416V14H418V15H420V16H424V14H426V15H428V14H429V17H430V20H433V15H436V14H444V15H447V14H449V15H454V16H456V15H467V16H468V15H470V16H473V17H475V16H479V15H480V14H482V17H483V19H486V16H488V15H489V14H493V15H494V16H496V15H501V17H503V15H510V16H515V14H517V13H520V15H522V16H524V15H526V13H528V14H532V13H534V14H535V17H536V18H538V19H539V14H541V15H543V14H545V15H547V16H551V15H555V16H557V15H560V16H566V15H571V14H575V16H576V14H578V15H580V16H582V15H596V16H598V15H603V14H607V18H609V15H612V16H614V15H616V16H617V15H622V16H625V15H628V16H629V17H631V16H632V17H633V16H639V17H641V20H642V18H644V19H645V16H647V15H649V16H650V15H654V16H657V15H674V14H676V16H678V17H680V16H682V15H684V14H686V15H688V14H690V15H692V14H694V15H703V16H705V15H707V16H710V17H713V14H714V13H716V17H719V14H722V15H728V13H731V14H734V16H737V13H739V17H742V15H746V20H747V18H749V19H750V16H752V15H759V14H761V15H763V16H767V15H769V14H771V15H781V14H784V16H786V15H788V16H790V15H791V16H793V14H794V15H808V14H810V15H820V14H826V15H827V16H829V15H830V16H832V15H838V14H840V16H842V14H845V16H847V14H851V15H853V17H854V18H856V19H857V14H858V15H859V14H861V13H863V14H865V16H867V14H870V13H874V14H878V15H880V14H894V15H901V16H902V15H905V16H907V15H908V17H910V14H912V15H914V16H916V15H918V13H919V14H925V15H926V14H928V15H931V13H932V14H934V13H935V14H939V13H941V15H945V14H946V15H949V14H953V13H959V16H961V15H969V14H974V18H978V15H980V17H982V15H985V16H988V15H990V16H992V17H995V15H999V14H1004V17H1005V14H1011V15H1013V14H1017V15H1023V16H1029V14H1030V15H1034V14H1036V13H1038V14H1040V15H1042V14H1052V16H1054V14H1060V13H1063V14H1070V15H1073V14H1074V15H1076V16H1080V14H1083V15H1089V16H1093V15H1095V16H1099V15H1100V17H1104V19H1109V21H1116V23H1123V24H1129V25H1134V26H1141V27H1147V29H1153V30H1159V32H1164V34H1168V36H1171V37H1178V38H1181V38Z" fill="#387db9"/></svg>
<svg class="r c" style="left:419px;top:579px" width="1195" height="38"><rect x="0" y="0" width="1176" height="38" fill="#3a3a3a"/><rect x="1184" y="0" width="2" height="38" fill="#3a3a3a"/><path d="M0 38H0V2H2V18H6V21H8V19H10V21H14V19H16V21H18V19H22V18H24V20H26V19H28V21H34V18H36V21H38V20H40V21H42V19H44V18H46V19H48V20H50V31H52V25H53V14H54V2H56V14H57V25H58V32H60V34H68V32H70V33H76V32H78V34H84V33H104V29H106V27H108V15H109V3H111V15H112V24H114V32H116V33H120V32H122V33H124V34H128V33H134V32H136V33H140V32H146V33H157V31H159V27H161V25H162V18H163V6H165V18H166V24H167V27H169V31H171V32H184V33H194V32H198V34H202V33H206V34H210V31H212V29H214V26H216V20H217V8H219V20H220V26H222V30H224V32H226V33H238V32H240V34H244V33H246V32H250V34H256V33H265V32H267V28H269V27H270V24H271V12H273V24H274V30H277V31H279V33H281V34H286V33H298V32H300V33H316V32H320V31H322V33H324V29H325V17H327V29H328V33H330V32H334V34H338V33H340V32H346V33H352V34H354V33H365V31H367V30H369V28H371V20H373V25H375V23H377V18H379V14H381V28H384V31H385V30H386V32H387V33H392V35H393V34H397V33H398V35H399V34H403V33H404V35H405V34H406V33H409V32H410V34H411V36H413V34H415V33H416V35H417V34H421V31H422V33H423V32H426V22H428V17H430V22H434V29H436V26H438V24H440V31H441V30H444V32H445V31H446V33H447V32H451V31H452V33H453V32H457V31H458V33H459V32H463V30H464V32H465V31H469V30H470V32H471V31H473V30H475V29H476V31H477V30H478V27H480V22H482V20H485V21H487V26H489V30H493V29H494V31H495V30H496V33H499V32H500V34H505V33H506V35H507V34H511V33H512V35H513V34H514V35H517V34H518V36H519V35H520V33H523V32H524V34H525V32H529V23H531V20H533V25H535V26H538V20H540V31H541V30H542V31H543V30H547V29H550V32H553V31H554V33H555V32H556V33H559V32H560V34H561V33H565V32H566V34H567V33H571V31H572V33H573V32H577V31H578V33H579V32H581V31H583V27H585V24H587V22H589V25H592V28H595V29H596V31H597V30H598V32H600V26H602V34H603V33H604V30H606V34H607V33H608V35H609V34H610V33H613V32H614V34H615V33H619V32H620V34H621V33H625V32H626V33H627V32H629V30H631V29H632V21H634V28H636V16H638V22H640V24H643V28H645V26H647V32H648V26H650V32H651V31H653V26H655V30H656V32H657V31H658V30H661V31H662V33H663V32H664V31H667V30H668V33H669V32H673V31H674V33H675V32H679V31H680V33H681V28H683V21H685V29H689V26H692V25H694V31H696V28H698V31H699V30H700V32H702V30H703V29H704V31H708V30H709V29H710V31H711V33H715V32H716V36H717V35H721V34H723V33H724V34H727V33H728V35H729V34H731V35H733V34H734V29H737V24H739V26H741V30H743V24H745V26H751V28H756V30H757V29H758V31H759V30H763V29H764V31H765V30H766V31H769V30H770V32H775V31H776V33H777V32H782V34H783V33H786V31H787V30H788V27H793V26H796V21H798V30H799V29H800V26H805V28H808V30H811V31H812V33H813V32H814V28H816V31H817V30H818V32H819V31H821V34H823V33H824V35H825V34H829V33H830V35H831V33H835V32H836V34H837V33H838V27H842V31H843V30H844V25H846V27H848V19H850V30H852V28H854V32H855V31H856V25H858V31H859V30H860V32H861V31H865V30H866V32H867V31H872V33H873V32H877V31H878V33H879V32H883V31H884V33H885V32H889V31H890V22H891V30H895V29H896V27H898V31H900V26H902V28H906V29H911V31H913V30H914V32H915V31H916V32H919V31H920V33H921V32H925V31H926V33H927V32H932V34H933V33H937V32H938V34H939V33H941V30H942V25H946V30H949V29H950V31H951V24H953V30H955V29H956V25H958V29H971V30H973V29H974V31H975V30H976V31H979V30H980V32H984V31H985V30H986V32H987V31H991V30H992V32H993V31H996V24H999V28H1001V32H1003V31H1004V27H1006V29H1010V26H1012V28H1014V32H1015V31H1016V33H1017V32H1021V29H1022V31H1023V30H1024V29H1026V32H1027V31H1028V33H1029V32H1030V31H1033V30H1034V32H1035V31H1036V33H1039V32H1040V34H1041V33H1045V32H1046V34H1047V33H1048V26H1064V28H1067V26H1069V29H1070V31H1071V30H1072V29H1075V30H1076V32H1077V31H1078V27H1081V30H1082V32H1083V31H1084V30H1086V32H1087V31H1088V33H1089V32H1093V31H1094V33H1095V31H1098V32H1099V31H1100V33H1101V32H1105V31H1106V29H1108V31H1111V30H1112V32H1113V31H1116V32H1117V31H1118V33H1119V32H1121V33H1123V32H1124V34H1125V33H1126V34H1129V33H1130V35H1131V34H1132V37H1176V38H1184V37H1186V38H1187V38Z" fill="#387db9"/></svg>
<svg class="r c" style="left:419px;top:620px" width="1195" height="38"><rect x="0" y="0" width="1146" height="38" fill="#3a3a3a"/><rect x="1160" y="0" width="2" height="38" fill="#3a3a3a"/><rect x="1168" y="0" width="2" height="38" fill="#3a3a3a"/><rect x="1184" y="0" width="2" height="38" fill="#3a3a3a"/><path d="M0 38H0V2H2V18H6V21H8V19H10V21H12V19H14V18H18V19H20V18H22V21H24V19H26V21H28V19H30V21H34V20H36V21H38V20H40V21H44V18H46V19H48V21H50V33H52V30H53V22H54V10H56V22H57V28H58V31H60V33H70V34H74V33H76V32H82V33H90V34H94V32H96V33H104V32H106V30H108V24H109V12H111V24H112V28H114V31H116V34H120V33H122V34H124V33H126V34H130V33H132V34H134V33H138V34H146V33H152V34H154V33H158V32H161V31H162V29H163V17H165V29H166V32H170V33H172V34H176V33H184V34H188V33H198V34H200V33H210V32H212V31H216V29H217V17H219V29H220V33H222V34H224V32H228V33H230V32H240V33H242V34H248V33H252V34H260V32H270V33H271V21H273V33H276V32H282V33H286V32H300V33H304V34H314V33H315V32H317V33H318V34H324V33H325V21H327V33H328V32H332V33H338V34H344V32H350V33H356V34H360V33H367V32H371V30H373V29H375V26H377V30H378V24H379V21H381V30H384V32H385V31H386V33H392V35H393V34H397V33H398V35H399V34H403V33H404V35H405V34H406V33H409V32H410V34H411V35H413V34H415V33H416V35H417V34H421V31H422V33H423V32H426V26H428V23H430V26H434V31H435V30H436V28H438V27H440V32H441V31H444V32H445V31H446V33H447V32H451V31H452V33H453V32H457V31H458V33H459V32H463V31H464V33H465V32H469V31H470V33H471V32H473V31H475V30H476V32H477V31H478V29H480V26H482V25H487V28H489V31H493V30H494V32H495V31H496V33H499V32H500V34H505V33H506V35H507V34H511V33H512V35H513V34H517V33H518V35H519V34H520V33H523V32H524V34H525V32H529V26H531V25H533V28H538V25H540V32H541V31H542V32H543V31H547V29H548V31H549V30H550V32H553V31H554V33H555V32H556V33H559V32H560V34H561V33H565V32H566V34H567V33H571V31H572V33H573V32H577V31H578V33H579V32H583V29H585V27H587V26H589V28H592V30H596V32H597V31H598V32H600V28H602V34H603V33H604V31H606V34H607V33H608V35H609V34H610V33H613V32H614V34H615V33H619V32H620V34H621V33H625V32H626V33H627V32H629V31H631V30H632V25H634V30H636V22H638V26H640V27H643V29H644V31H645V28H647V32H648V28H650V33H651V32H653V28H655V31H656V33H657V32H658V31H662V33H663V32H667V31H668V33H669V32H673V31H674V33H675V32H679V31H680V33H681V30H683V25H685V29H686V31H687V30H689V28H694V32H696V30H697V29H698V32H699V31H700V32H702V31H703V30H704V32H708V31H709V30H710V32H711V33H715V32H716V35H717V34H721V33H722V34H723V33H724V34H727V33H728V35H729V34H733V33H734V31H735V30H737V27H739V28H741V31H743V27H745V28H751V29H752V31H753V30H756V31H757V30H758V32H759V31H763V30H764V32H765V31H766V32H769V31H770V33H771V32H775V31H776V33H777V32H782V34H783V33H786V31H787V30H788V28H793V27H796V22H798V30H799V29H800V27H805V28H808V30H811V31H812V33H813V32H814V28H816V31H817V30H818V32H819V31H821V34H823V33H824V35H825V34H829V33H830V35H831V33H835V32H836V34H837V33H838V28H842V31H843V30H844V26H846V28H848V20H850V30H852V28H854V32H855V31H856V26H858V31H859V30H860V32H861V31H865V30H866V32H867V31H872V33H873V32H877V31H878V33H879V32H883V31H884V33H885V32H889V31H890V23H891V30H895V29H896V28H898V31H900V27H902V28H906V29H911V31H913V30H914V32H915V31H916V32H919V31H920V33H921V32H925V31H926V33H927V32H932V34H933V33H937V32H938V34H939V33H941V30H942V26H946V30H949V29H950V31H951V25H953V30H955V29H956V26H958V29H971V30H973V29H974V31H975V30H976V31H979V30H980V32H984V31H985V30H986V32H987V31H991V30H992V32H993V31H996V25H999V28H1001V32H1003V31H1004V28H1006V29H1010V27H1012V28H1014V32H1015V31H1016V33H1017V32H1021V29H1022V31H1023V30H1024V29H1026V32H1027V31H1028V33H1029V32H1030V31H1033V30H1034V32H1035V31H1036V33H1039V32H1040V34H1041V33H1045V32H1046V34H1047V33H1048V27H1064V28H1067V27H1069V29H1070V31H1071V30H1072V29H1075V30H1076V32H1077V31H1078V28H1081V30H1082V32H1083V31H1084V30H1086V32H1087V31H1088V33H1089V32H1093V31H1094V33H1095V31H1098V32H1099V31H1100V33H1101V32H1105V31H1106V29H1108V31H1111V30H1112V32H1113V31H1116V32H1117V31H1118V33H1119V32H1121V33H1123V32H1124V34H1125V33H1126V34H1129V33H1130V35H1131V34H1132V37H1146V38H1160V37H1162V38H1168V37H1170V38H1184V37H1186V38H1187V38Z" fill="#387db9"/></svg>
<svg class="r c" style="left:419px;top:661px" width="1189" height="38"><rect x="34" y="0" width="28" height="38" fill="#3a3a3a"/><rect x="72" y="0" width="2" height="38" fill="#3a3a3a"/><rect x="82" y="0" width="2" height="38" fill="#3a3a3a"/><rect x="86" y="0" width="94" height="38" fill="#3a3a3a"/><rect x="192" y="0" width="313" height="38" fill="#3a3a3a"/><rect x="506" y="0" width="670" height="38" fill="#3a3a3a"/><path d="M0 38H0V38H34V37H52V30H54V37H62V38H72V37H74V38H82V37H84V38H86V37H103V36H104V35H105V34H106V33H107V32H108V30H109V28H111V32H112V33H113V34H114V35H115V36H116V37H157V36H158V35H159V34H160V33H161V31H162V29H163V27H165V31H166V33H167V34H168V35H169V36H170V37H180V38H192V37H211V36H213V35H214V33H215V32H216V31H217V29H219V32H220V33H221V35H222V36H224V37H264V36H266V35H267V34H268V33H269V31H270V30H272V33H273V34H274V35H275V36H277V37H319V36H320V35H321V34H322V33H323V32H324V31H326V33H327V34H328V35H329V36H330V37H371V36H372V35H373V34H374V33H375V32H376V31H378V33H379V34H380V35H381V36H382V37H425V36H427V35H428V34H429V33H430V32H432V34H433V35H434V36H436V37H478V36H480V35H482V34H483V33H485V35H487V36H489V37H505V38H506V37H528V36H530V35H532V34H533V33H535V35H537V36H539V37H581V35H583V34H587V33H590V34H591V35H594V37H628V36H630V35H632V34H633V35H634V34H635V35H643V36H646V37H680V36H682V35H687V34H688V35H690V34H692V35H697V36H700V37H734V36H736V35H739V34H741V35H746V34H747V35H751V36H754V37H786V36H788V35H797V34H798V35H799V34H800V35H803V36H806V37H839V36H841V35H842V34H843V35H850V34H851V35H857V36H860V37H890V36H892V35H898V34H900V35H908V34H909V36H912V37H942V36H944V35H951V34H952V35H953V34H954V35H958V34H959V36H962V37H998V36H1001V35H1002V36H1004V35H1005V36H1011V37H1050V36H1052V35H1053V36H1059V35H1060V36H1065V37H1102V36H1107V35H1108V36H1110V35H1112V36H1113V37H1176V38H1181V38Z" fill="#387db9"/></svg>
<svg class="r c" style="left:419px;top:723px" width="1189" height="38"><rect x="0" y="0" width="1180" height="38" fill="#3a3a3a"/><path d="M0 38H0V29H2V25H4V27H7V29H8V24H9V25H14V27H16V24H18V26H20V25H24V24H26V25H28V26H30V25H33V26H35V24H40V25H42V24H44V25H46V26H48V27H52V14H54V26H58V25H59V24H61V25H64V26H66V25H69V26H71V24H75V26H77V27H81V25H86V24H88V26H92V24H94V27H97V24H99V27H101V24H103V25H105V24H107V28H108V19H110V24H111V25H113V24H115V25H121V24H125V25H133V24H135V25H141V24H147V26H149V24H153V26H159V25H161V24H162V23H164V24H171V25H176V24H179V27H183V24H187V26H188V25H190V24H192V25H196V26H198V25H200V26H202V24H204V26H206V27H208V25H215V26H216V24H217V25H218V27H220V24H223V25H225V26H232V25H236V24H238V25H242V24H244V26H246V24H253V25H257V26H263V27H265V25H267V24H269V27H271V24H276V27H280V24H282V26H285V25H294V24H300V25H306V24H307V26H311V24H313V26H315V25H318V24H320V25H324V26H325V24H326V26H328V25H335V24H341V26H343V24H347V25H349V24H353V25H355V27H357V24H359V25H365V24H371V26H373V25H376V24H379V25H389V26H390V25H392V27H394V25H395V24H397V26H399V24H401V25H405V26H407V25H409V24H413V26H416V27H418V26H422V25H430V24H435V25H441V26H443V25H444V24H450V26H452V25H454V26H456V25H464V24H466V25H472V24H485V22H486V24H487V25H489V26H494V25H499V24H505V25H510V24H516V27H518V26H520V25H523V24H531V25H536V26H538V22H539V24H540V25H548V24H552V25H559V24H561V26H562V25H578V26H583V24H585V26H588V25H589V24H592V26H595V25H600V26H601V25H605V26H611V25H619V26H621V25H623V26H628V24H630V25H636V24H638V25H644V22H645V24H649V26H651V25H653V26H655V24H657V25H659V26H662V25H666V24H668V25H672V24H676V27H678V25H682V27H684V25H692V27H694V25H697V26H698V25H700V26H702V25H704V26H706V25H708V24H710V25H712V26H714V25H718V26H722V25H725V27H727V25H729V24H731V25H733V26H736V24H739V25H742V26H744V25H746V27H748V25H749V24H750V25H758V24H761V25H763V24H765V26H767V25H770V26H774V25H778V24H789V26H794V24H803V23H804V24H814V26H816V24H822V26H824V24H853V26H855V24H856V23H857V24H858V26H865V24H869V26H872V24H876V26H877V24H913V26H915V24H917V26H921V24H947V26H950V24H954V26H958V24H961V25H962V24H964V26H968V24H979V26H981V24H993V26H995V24H1003V26H1005V24H1013V26H1014V22H1015V26H1017V24H1024V26H1028V24H1036V26H1038V24H1040V26H1042V24H1046V26H1048V24H1053V26H1055V24H1057V26H1058V24H1072V26H1074V24H1076V26H1077V24H1094V26H1095V24H1101V25H1106V26H1111V28H1126V30H1141V32H1156V34H1166V36H1171V37H1180V38H1181V38Z" fill="#387db9"/></svg>
<svg class="r c" style="left:419px;top:764px" width="1189" height="38"><rect x="0" y="0" width="1180" height="38" fill="#3a3a3a"/><path d="M0 38H0V37H2V12H3V14H4V12H5V13H8V12H9V13H14V14H15V12H16V14H17V13H18V14H19V13H20V12H21V13H22V12H23V14H26V13H27V14H28V12H29V14H30V12H32V13H33V12H35V13H37V12H39V13H43V12H44V13H45V14H46V12H47V13H50V10H53V20H55V6H58V4H60V3H64V4H66V3H71V4H73V3H76V5H79V4H81V3H86V4H89V2H91V4H93V2H99V4H101V2H102V3H106V2H107V3H108V15H110V9H111V3H113V4H117V3H121V2H123V3H127V2H129V3H131V2H132V3H140V4H142V6H144V4H145V5H147V4H150V3H153V5H155V3H158V4H161V11H162V13H164V8H165V4H169V3H171V5H175V4H178V5H180V3H182V4H192V3H202V4H208V5H210V6H214V9H218V7H220V4H222V6H223V3H225V4H227V3H230V5H241V4H253V6H255V4H265V6H269V7H275V3H278V2H282V4H284V3H286V4H290V3H294V5H295V4H301V3H302V2H303V5H305V4H307V3H309V2H311V3H313V2H314V3H316V7H325V9H329V3H333V4H334V3H335V4H337V3H343V4H345V3H350V2H352V3H360V2H362V3H370V2H374V3H376V4H378V7H381V8H382V6H384V2H386V3H392V2H393V3H398V2H400V3H404V2H406V3H413V2H415V3H417V4H419V3H421V5H423V6H425V4H429V8H431V9H433V7H435V4H436V3H438V4H448V3H452V4H456V5H458V4H462V3H464V4H465V3H467V6H470V4H474V3H478V7H484V9H485V10H488V4H493V3H497V4H508V3H510V4H512V3H514V5H517V4H519V5H523V3H526V4H528V5H530V7H532V6H535V7H538V6H542V4H544V3H546V4H551V3H553V4H555V3H562V4H564V3H566V5H568V3H574V4H578V6H580V4H586V6H592V7H594V4H597V2H603V3H606V4H608V3H610V4H612V2H617V3H621V4H622V5H623V4H627V3H629V4H634V5H636V6H642V7H644V3H651V2H656V3H658V4H660V2H663V3H667V4H671V3H673V4H675V3H677V4H679V5H681V2H683V4H687V3H691V6H693V5H695V6H697V3H702V2H704V3H706V2H712V3H716V4H718V3H722V2H724V4H736V6H738V4H742V7H744V6H746V7H750V6H752V4H758V3H760V5H762V4H766V3H772V4H778V3H780V5H781V4H784V3H792V4H794V3H796V5H799V6H803V8H805V4H807V5H808V2H810V5H813V3H817V4H819V3H823V4H827V2H829V5H833V3H837V4H841V2H842V4H844V3H848V2H850V3H853V5H859V3H864V4H866V2H869V3H871V2H877V4H878V2H882V3H886V4H888V2H892V3H900V5H902V6H904V5H906V7H911V5H912V3H916V4H918V3H922V4H930V5H932V4H934V5H938V3H944V4H946V3H948V2H951V4H955V5H957V8H961V9H963V6H965V5H967V3H969V5H971V2H973V3H976V2H980V3H990V4H994V2H996V3H998V4H1001V2H1002V4H1007V5H1009V8H1011V6H1013V8H1015V6H1018V3H1020V4H1024V3H1028V4H1030V3H1033V4H1037V3H1044V2H1052V3H1057V2H1059V4H1063V5H1064V6H1070V2H1077V3H1085V2H1087V3H1088V4H1090V3H1094V5H1095V3H1100V5H1102V6H1104V4H1108V3H1113V5H1117V4H1119V3H1121V4H1125V3H1129V2H1133V0H1180V38H1181V38Z" fill="#387db9"/></svg>
<svg class="r c" style="left:419px;top:826px" width="1189" height="38"><rect x="0" y="0" width="1180" height="38" fill="#3a3a3a"/><path d="M0 38H0V37H2V17H4V20H6V12H8V15H9V14H10V15H14V16H16V15H18V16H20V14H24V13H26V16H29V13H30V15H32V14H38V16H40V14H42V16H45V15H47V18H49V16H53V20H56V14H59V15H63V17H69V14H71V15H73V14H75V13H81V12H83V13H85V15H87V13H89V14H91V13H103V14H107V15H108V20H111V14H112V15H115V13H116V12H118V13H122V12H124V14H126V13H128V12H133V13H135V12H137V13H139V12H143V17H145V15H150V13H152V14H154V17H156V18H158V16H160V17H162V18H165V14H170V15H171V14H173V13H175V14H178V12H180V15H182V12H184V14H187V13H189V12H195V13H199V12H203V15H205V13H207V14H209V13H211V14H215V15H217V16H219V14H223V13H229V12H231V14H232V13H234V14H243V13H245V14H252V13H254V15H256V13H260V14H265V17H269V15H273V14H275V16H277V14H283V13H284V14H286V16H288V13H294V12H296V14H302V13H304V12H306V13H308V12H310V14H312V13H318V14H323V15H325V16H327V14H329V12H331V15H333V12H335V13H341V14H343V12H346V13H348V14H350V13H352V12H354V13H356V12H358V13H366V12H368V13H372V15H375V14H377V15H381V16H383V15H385V13H394V14H396V15H406V12H410V13H412V14H414V12H416V13H418V12H420V14H422V13H424V16H425V14H429V16H430V15H432V16H436V14H438V13H441V14H442V13H444V14H452V13H454V14H456V13H458V15H460V12H464V14H466V13H468V14H470V15H472V14H474V16H477V14H483V16H487V14H489V13H491V12H494V13H496V14H498V12H500V14H508V13H512V14H515V12H516V14H518V13H521V14H534V15H538V17H542V14H547V16H549V14H555V15H557V13H561V12H563V14H565V13H577V12H579V14H584V16H586V18H588V17H590V16H591V17H592V15H593V14H595V15H597V14H607V13H609V14H611V15H614V16H616V15H618V16H620V15H623V14H625V13H628V15H630V14H632V15H633V14H635V15H639V18H641V16H645V15H647V12H649V13H662V12H664V13H666V15H668V13H673V12H678V14H684V15H686V14H690V15H692V14H694V16H696V18H700V14H702V13H703V14H707V15H709V14H713V15H717V14H720V16H722V15H724V16H726V15H728V13H733V12H734V13H737V14H741V15H743V16H751V15H753V14H761V13H763V12H768V13H771V12H773V13H777V16H781V14H785V13H788V12H789V14H791V13H793V16H795V13H798V17H800V14H803V16H805V14H807V13H811V12H813V15H815V12H817V13H820V14H822V13H826V12H828V15H830V14H832V13H843V14H850V15H854V16H856V17H860V13H864V14H872V15H874V14H878V15H881V14H883V16H884V14H889V13H892V14H894V16H896V13H898V14H900V15H902V16H904V17H907V16H909V18H911V15H915V14H917V12H923V16H925V14H927V15H933V13H934V14H936V15H938V14H954V15H956V14H959V17H961V15H963V16H965V14H967V15H969V14H971V15H973V14H975V13H979V15H981V14H985V13H987V12H990V13H998V12H1000V13H1006V14H1008V13H1010V16H1014V17H1016V13H1023V14H1025V15H1027V14H1029V12H1031V13H1037V12H1039V14H1041V12H1045V15H1047V13H1051V12H1054V13H1058V14H1060V15H1062V14H1064V17H1066V16H1068V17H1070V16H1073V13H1075V14H1077V13H1080V14H1086V13H1092V14H1094V12H1097V13H1104V14H1107V17H1111V21H1118V25H1132V27H1152V28H1156V31H1161V34H1166V37H1180V38H1181V38Z" fill="#387db9"/></svg>
<svg class="r c" style="left:419px;top:867px" width="1189" height="38"><rect x="0" y="0" width="1178" height="38" fill="#3a3a3a"/><path d="M0 38H0V31H2V19H4V12H6V1H8V0H10V1H23V0H25V1H33V0H34V2H36V1H38V2H42V5H45V4H49V6H51V8H52V7H53V21H56V2H57V4H58V1H60V3H62V2H64V4H66V1H68V2H72V1H76V3H77V1H83V2H93V1H95V2H98V4H102V6H106V7H108V20H111V2H112V1H114V2H116V1H118V3H125V1H127V0H130V1H134V2H138V1H144V2H150V1H152V4H155V6H157V5H159V6H161V7H162V11H165V2H166V7H167V2H173V1H175V2H179V1H181V2H187V3H191V2H197V3H198V2H202V4H205V3H209V5H211V7H217V8H219V4H224V3H238V2H244V3H245V4H247V3H253V2H255V5H257V2H259V3H263V5H267V7H271V9H273V6H275V1H276V3H278V2H280V3H283V2H292V1H295V2H304V4H305V6H309V4H311V3H318V4H322V6H325V8H327V4H329V2H335V3H337V1H339V3H341V1H343V3H351V2H355V3H357V2H361V1H363V3H367V5H375V6H377V8H382V3H389V2H393V1H397V2H399V3H403V2H406V1H408V3H410V2H413V4H415V2H419V5H423V8H425V9H430V12H433V11H435V6H437V5H440V4H443V2H445V1H447V4H448V2H452V1H456V2H459V3H461V4H462V3H472V4H474V5H478V7H480V6H484V9H487V6H491V7H495V5H498V4H502V3H506V2H508V3H510V2H512V3H518V1H521V2H524V3H527V4H531V5H534V7H536V8H538V9H540V5H542V4H544V2H553V4H555V2H560V3H564V4H566V2H570V1H572V3H576V2H580V3H582V4H586V6H592V4H593V3H597V2H607V1H609V3H611V0H614V1H619V2H620V3H622V1H625V2H633V4H635V5H637V6H641V8H644V9H646V8H649V5H654V8H656V4H663V5H665V3H667V4H669V3H671V2H675V5H676V3H678V4H680V3H683V4H686V3H687V5H694V7H696V8H698V6H699V1H701V2H703V4H705V3H707V5H709V2H713V3H720V1H722V3H724V4H726V1H730V3H732V2H736V3H738V4H747V9H749V8H751V5H753V2H755V5H757V2H759V3H761V5H763V6H767V4H771V2H772V4H774V1H776V3H778V2H780V3H783V1H789V2H792V4H795V5H797V4H799V7H803V9H804V6H806V1H809V3H811V2H817V1H821V0H825V1H829V2H830V0H832V2H834V1H836V2H838V3H840V2H846V5H854V9H856V8H857V7H859V1H862V2H870V3H872V2H880V3H887V2H891V3H893V1H897V4H899V3H902V7H904V6H908V7H910V8H912V3H914V2H916V1H917V2H921V1H925V2H931V1H933V2H935V1H936V3H939V1H943V0H946V1H948V2H952V4H954V5H957V6H959V7H962V6H964V2H966V1H974V0H978V3H983V4H985V2H986V4H987V2H989V0H991V1H993V2H995V1H1003V2H1005V4H1009V8H1011V7H1016V4H1018V2H1022V3H1026V2H1030V4H1032V6H1034V5H1045V4H1049V2H1055V3H1060V4H1062V7H1068V6H1069V4H1071V1H1075V2H1077V3H1079V2H1090V1H1092V2H1099V4H1101V3H1104V4H1108V8H1112V12H1118V17H1126V20H1133V23H1152V25H1159V28H1166V33H1171V37H1178V38H1181V38Z" fill="#387db9"/></svg>
<svg class="r c" style="left:419px;top:949px" width="1189" height="38"><rect x="0" y="0" width="1180" height="38" fill="#3a3a3a"/><path d="M0 38H0V37H2V9H4V13H6V1H8V3H10V2H12V3H14V4H16V3H20V5H22V6H26V3H29V5H34V2H38V4H46V5H48V7H53V13H56V3H57V5H59V4H66V3H68V5H70V3H72V4H74V2H80V3H85V4H87V2H89V4H91V3H94V4H95V2H97V3H101V5H103V6H108V13H111V3H112V2H115V4H117V2H118V1H122V3H126V2H127V4H129V3H135V4H137V3H141V2H143V3H144V2H146V3H148V2H150V4H154V5H158V4H160V6H162V8H165V3H172V6H176V5H180V4H182V3H186V5H190V4H192V3H194V4H196V3H198V4H206V3H209V6H213V7H217V8H219V4H223V3H234V4H240V6H242V4H249V3H250V5H254V3H255V4H257V2H259V4H263V5H268V6H270V8H272V5H274V3H280V5H282V4H284V3H286V4H288V6H290V4H298V2H300V3H307V4H309V3H314V4H317V5H321V8H324V6H326V5H327V6H329V5H336V3H338V2H340V4H342V3H344V2H346V4H348V2H356V1H358V2H360V4H362V2H364V3H366V5H368V6H370V5H374V6H376V4H380V6H382V1H386V4H388V1H390V3H392V2H399V1H401V2H403V3H406V1H408V2H422V3H424V4H427V5H431V7H433V6H435V2H437V5H439V3H445V2H447V3H449V4H453V3H455V4H457V3H467V4H469V3H475V5H478V6H479V4H483V7H487V3H489V4H492V3H493V5H495V1H497V3H499V4H501V5H502V6H504V7H507V6H511V5H516V4H518V3H520V4H522V5H524V4H528V5H534V7H540V5H542V4H544V5H546V4H553V5H555V3H559V4H561V5H563V4H565V5H571V4H577V5H579V4H583V6H587V8H590V9H592V7H595V4H603V2H605V3H607V2H624V4H626V2H629V3H630V2H633V3H635V4H638V5H640V6H642V5H644V6H646V3H648V2H650V1H652V2H653V1H655V2H661V3H663V2H664V3H666V1H668V3H672V1H674V2H679V3H683V2H685V3H687V4H692V5H695V6H699V2H702V1H704V2H708V1H710V2H712V1H714V3H715V2H717V3H726V4H732V6H734V3H736V5H740V6H742V7H744V8H750V6H754V4H756V3H758V1H761V3H763V2H765V4H766V3H770V4H772V1H774V3H776V2H778V1H781V2H783V3H786V4H788V1H790V3H794V2H796V4H800V6H802V5H805V4H807V2H809V5H811V2H816V4H821V3H826V4H829V2H835V3H840V2H845V4H849V5H851V4H852V6H854V7H856V8H857V6H859V3H861V4H862V3H866V5H869V3H872V4H880V5H882V4H887V3H889V2H892V3H896V2H900V4H902V6H904V5H906V6H910V5H912V3H920V2H936V1H938V2H940V1H942V3H946V2H949V3H957V5H959V6H961V5H967V3H973V2H975V4H976V5H978V4H982V3H989V4H991V5H995V4H999V1H1001V3H1003V4H1005V6H1008V4H1012V6H1016V4H1022V6H1025V3H1029V2H1031V3H1035V2H1040V3H1044V5H1048V2H1052V3H1054V4H1057V5H1063V6H1067V8H1069V5H1072V4H1080V5H1082V3H1084V2H1086V3H1088V4H1089V3H1093V4H1095V3H1099V4H1101V6H1103V3H1104V5H1108V9H1112V13H1118V17H1126V20H1133V22H1152V25H1159V28H1163V32H1166V35H1168V33H1170V37H1180V38H1181V38Z" fill="#387db9"/></svg>
</body></html>
